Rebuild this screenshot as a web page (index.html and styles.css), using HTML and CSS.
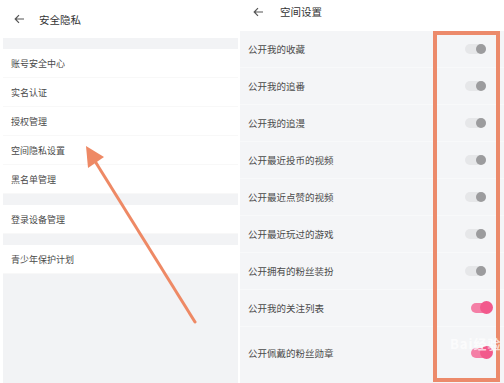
FILE: index.html
```html
<!DOCTYPE html>
<html lang="zh-CN">

<head>
    <meta charset="UTF-8">
    <meta name="viewport" content="width=device-width, initial-scale=1.0">
    <title>安全隐私 / 空间设置</title>
    <link rel="stylesheet" href="styles.css">
</head>

<body>
    <div class="screens">
        <!-- 左: 安全隐私 -->
        <div class="panel left-panel">
            <div class="topbar">
                <svg class="back" width="11" height="10" viewBox="0 0 11 10">
                    <path d="M10 5H1.5M5 1.2L1.2 5L5 8.8" fill="none" stroke="#555" stroke-width="1.2" />
                </svg>
                <span class="title">安全隐私</span>
            </div>
            <div class="group">
                <div class="row">账号安全中心</div>
                <div class="row">实名认证</div>
                <div class="row">授权管理</div>
                <div class="row">空间隐私设置</div>
                <div class="row">黑名单管理</div>
            </div>
            <div class="group">
                <div class="row">登录设备管理</div>
            </div>
            <div class="group">
                <div class="row">青少年保护计划</div>
            </div>
            <div class="filler"></div>
        </div>

        <!-- 右: 空间设置 -->
        <div class="panel right-panel">
            <div class="topbar small">
                <svg class="back" width="11" height="10" viewBox="0 0 11 10">
                    <path d="M10 5H1.5M5 1.2L1.2 5L5 8.8" fill="none" stroke="#555" stroke-width="1.2" />
                </svg>
                <span class="title">空间设置</span>
            </div>
            <div class="settings">
                <div class="setting">公开我的收藏<span class="switch"></span></div>
                <div class="setting">公开我的追番<span class="switch"></span></div>
                <div class="setting">公开我的追漫<span class="switch"></span></div>
                <div class="setting">公开最近投币的视频<span class="switch"></span></div>
                <div class="setting">公开最近点赞的视频<span class="switch"></span></div>
                <div class="setting">公开最近玩过的游戏<span class="switch"></span></div>
                <div class="setting">公开拥有的粉丝装扮<span class="switch"></span></div>
                <div class="setting">公开我的关注列表<span class="switch on"></span></div>
                <div class="setting last">公开佩戴的粉丝勋章<span class="switch on"></span></div>
            </div>
        </div>
    </div>

    <!-- 注釈 (矢印と枠) -->
    <svg class="arrow" width="504" height="383" viewBox="0 0 504 383">
        <line x1="195" y1="322" x2="93" y2="158" stroke="#ee8965" stroke-width="3" stroke-linecap="round" />
        <polygon points="86,146 104,157 88,168" fill="#ee8965" />
    </svg>
    <div class="frame"></div>
    <div class="watermark">Bai经验</div>
</body>

</html>
```

FILE: styles.css
```css
body {
    font-family: "Noto Sans CJK SC", "Noto Sans", sans-serif;
    margin: 0;
    padding: 0;
    width: 504px;
    height: 383px;
    overflow: hidden;
    background-color: #fff;
    position: relative;
}

.screens {
    display: flex;
    gap: 2px;
    height: 383px;
}

.panel {
    display: flex;
    flex-direction: column;
}

.left-panel {
    width: 235px;
    margin-left: 3px;
    padding-bottom: 5px;
    background-color: #f2f3f5;
}

.left-panel .topbar {
    margin-left: -3px;
}

.right-panel {
    flex: 1;
}

.topbar {
    display: flex;
    align-items: center;
    height: 38px;
    padding-left: 14px;
    background-color: #fff;
}

.topbar.small {
    height: 31px;
    padding-left: 13px;
    align-items: flex-start;
    padding-top: 3px;
    box-sizing: border-box;
}

.topbar.small .back {
    margin-top: 4px;
}

.back {
    flex-shrink: 0;
}

.title {
    margin-left: 14px;
    font-size: 10.5px;
    color: #333;
}

.topbar.small .title {
    margin-left: 16px;
    line-height: 18px;
}

/* 左のリスト */
.group {
    margin-top: 11px;
    background-color: #fff;
}

.row {
    height: 29px;
    line-height: 29px;
    padding-left: 8px;
    font-size: 9px;
    color: #4a4a4a;
    border-bottom: 1px solid #f8f8f8;
    box-sizing: border-box;
}

.filler {
    flex: 1;
}

/* 右のリスト */
.settings {
    flex: 1;
    background-color: #f4f5f7;
}

.setting {
    display: flex;
    align-items: center;
    justify-content: space-between;
    height: 37px;
    padding-left: 8px;
    padding-right: 15px;
    font-size: 9.5px;
    color: #4a4a4a;
    border-bottom: 1px solid #f8f9fa;
    box-sizing: border-box;
}

.setting.last {
    height: 50px;
    padding-top: 2px;
    border-bottom: none;
}

.switch {
    position: relative;
    width: 21px;
    height: 10px;
    margin-right: 3px;
    border-radius: 5px;
    background-color: #e6e7e9;
}

.switch::after {
    content: "";
    position: absolute;
    right: 0;
    top: 0;
    width: 10px;
    height: 10px;
    border-radius: 50%;
    background-color: #9c9c9e;
}

.switch.on {
    margin-right: -3px;
    background-color: #f47fa6;
}

.switch.on::after {
    top: -2px;
    right: -1px;
    width: 13px;
    height: 13px;
    background-color: #f2598c;
}

/* 注釈 */
.arrow {
    position: absolute;
    left: 0;
    top: 0;
    pointer-events: none;
}

.frame {
    position: absolute;
    left: 433px;
    top: 31px;
    width: 59px;
    height: 343px;
    border: 4px solid #ec8a6b;
}

.watermark {
    position: absolute;
    left: 450px;
    top: 334px;
    white-space: nowrap;
    font-size: 13px;
    font-weight: bold;
    letter-spacing: 1px;
    color: rgba(255, 255, 255, 0.7);
}
```
